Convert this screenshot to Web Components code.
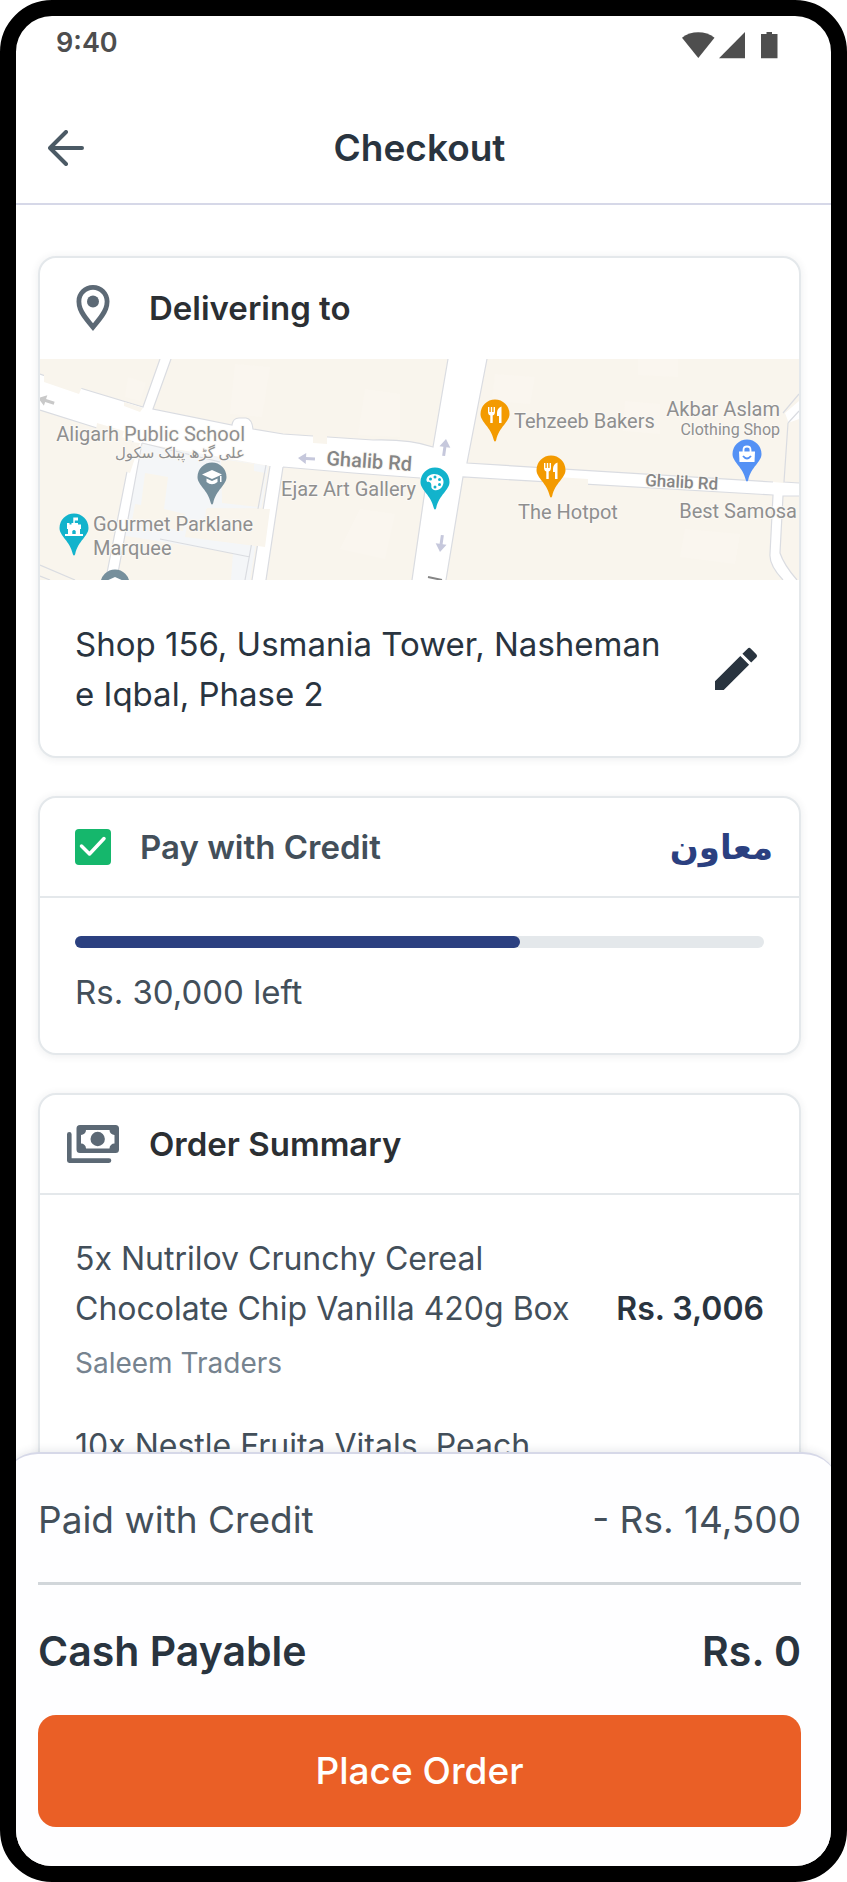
<!DOCTYPE html>
<html lang="en">
<head>
<meta charset="utf-8">
<meta name="viewport" content="width=device-width, initial-scale=1">
<title>Checkout</title>
<style>
  body { margin: 0; background: #fff; font-family: Inter, "Open Sans", sans-serif; color: #29343f; }
</style>
</head>
<body>
<phone-frame>
  <status-bar slot="top">9:40</status-bar>
  <app-header slot="top">Checkout</app-header>

  <info-card plain>
    <svg slot="icon" width="34" height="46" viewBox="0 0 33 46" aria-hidden="true">
      <path fill="#5c6975" fill-rule="evenodd" d="M16.500 0C7.400 0 0 7.300 0 16.400 0 28 9 36.500 16.500 46 24 36.500 33 28 33 16.400 33 7.300 25.600 0 16.500 0ZM16.500 4.800C23 4.800 28.200 10 28.200 16.400 28.200 25 21 32 16.500 38.300 12 32 4.800 25 4.800 16.400 4.800 10 10 4.800 16.500 4.800Z"/>
      <circle cx="16.500" cy="16.500" r="6" fill="#5c6975"/>
    </svg>
    <span slot="title">Delivering to</span>
    <street-map></street-map>
    <delivery-address>Shop 156, Usmania Tower, Nasheman e Iqbal, Phase 2</delivery-address>
  </info-card>

  <credit-card brand="معاون" value="445" max="689">Rs. 30,000 left</credit-card>

  <info-card>
    <svg slot="icon" width="52" height="38" viewBox="0 0 52 38" aria-hidden="true">
      <path fill="#5c6975" fill-rule="evenodd" d="M13 0H48.500A3.500 3.500 0 0 1 52 3.500V24.500A3.500 3.500 0 0 1 48.500 28H13A3.500 3.500 0 0 1 9.500 24.500V3.500A3.500 3.500 0 0 1 13 0ZM19 5A5 5 0 0 1 14 10V18.500A5 5 0 0 1 19 23.500H42.500A5 5 0 0 1 47.500 18.500V10A5 5 0 0 1 42.500 5Z"/>
      <circle cx="30.700" cy="14" r="7.200" fill="#5c6975"/>
      <path d="M2.300 9.300V35.600H42" fill="none" stroke="#5c6975" stroke-width="4.600" stroke-linecap="round" stroke-linejoin="round"/>
    </svg>
    <span slot="title">Order Summary</span>
    <order-list>
      <order-item price="Rs. 3,006" seller="Saleem Traders">5x Nutrilov Crunchy Cereal Chocolate Chip Vanilla 420g Box</order-item>
      <order-item>10x Nestle Fruita Vitals, Peach</order-item>
    </order-list>
  </info-card>

  <checkout-sheet slot="bottom">
    <summary-row slot="paid" amount="- Rs. 14,500">Paid with Credit</summary-row>
    <summary-row slot="total" strong amount="Rs. 0">Cash Payable</summary-row>
    Place Order
  </checkout-sheet>
</phone-frame>

<script>
const define = (name, html, setup) => {
  const tpl = document.createElement('template');
  tpl.innerHTML = html;
  customElements.define(name, class extends HTMLElement {
    constructor() {
      super();
      this.attachShadow({ mode: 'open' }).append(tpl.content.cloneNode(true));
    }
    connectedCallback() {
      if (setup) setup(this, s => this.shadowRoot.querySelector(s));
    }
  });
};

define('phone-frame', `
  <style>
    :host { display: flex; flex-direction: column; box-sizing: border-box; height: 100vh; min-height: 700px;
      border: 16px solid #000; border-radius: 52px; background: #fff; overflow: hidden; }
    main { flex: 1; min-height: 0; overflow-y: auto; scrollbar-width: none; display: flex; flex-direction: column;
      gap: 38px; padding: 51px 30px 38px 22px; }
    ::slotted(*) { flex-shrink: 0; }
  </style>
  <slot name="top"></slot>
  <main><slot></slot></main>
  <slot name="bottom"></slot>`);

define('status-bar', `
  <style>
    :host { display: flex; justify-content: space-between; align-items: flex-start; box-sizing: border-box;
      height: 76px; padding: 11px 53px 0 40px; font: 600 27px/32px Inter, sans-serif; color: #4e4e4e; }
    svg { margin-top: 5px; }
  </style>
  <time><slot></slot></time>
  <svg width="96" height="27" viewBox="0 0 96 27" fill="#4e4e4e" aria-hidden="true">
    <path d="M0 5.700C9 -1.600 23.500 -1.600 32.500 5.700L16.300 26Z"/>
    <path d="M37 26.300L63 0V26.300Z"/>
    <path d="M79 2H84.500V0H90V2H95.500V26.300H79Z"/>
  </svg>`);

define('app-header', `
  <style>
    :host { display: grid; grid-template-columns: 1fr auto 1fr; align-items: center; height: 111px;
      padding: 0 30px 0 22px; border-bottom: 2px solid #d6d8e8; }
    button { width: 56px; height: 56px; padding: 0; border: 0; background: none; display: grid; place-items: center; }
    h1 { margin: 0; font-size: 37px; line-height: 56px; font-weight: 600; }
  </style>
  <button aria-label="Back"><svg width="36" height="36" viewBox="0 0 36 36" fill="none" stroke="#4b5a65" stroke-width="4" stroke-linecap="round" stroke-linejoin="round"><path d="M18 2L2 18L18 34M3 18H34"/></svg></button>
  <h1><slot></slot></h1>`);

define('info-card', `
  <style>
    :host { display: block; border: 2px solid #e4e8eb; border-radius: 18px; background: #fff;
      box-shadow: 0 1px 8px rgba(40,50,70,.09); }
    header { display: flex; align-items: center; gap: 29px; height: 98px; padding: 0 26px; border-bottom: 2px solid #e4e8eb; }
    :host([plain]) header { height: 99px; border-color: transparent; }
    .icon { width: 54px; display: grid; place-items: center; }
    h2 { margin: 0; flex: 1; font-size: 33px; line-height: 50px; font-weight: 600; color: #2b2f33; }
  </style>
  <header><slot name="header"><span class="icon"><slot name="icon"></slot></span><h2><slot name="title"></slot></h2></slot></header>
  <slot></slot>`);

define('delivery-address', `
  <style>
    :host { display: flex; align-items: center; justify-content: space-between; gap: 28px; padding: 39px 35px 37px; }
    address { font: 400 33px/50px Inter, sans-serif; max-width: 592px; }
    button { flex: none; width: 56px; height: 56px; padding: 0; border: 0; background: none; }
  </style>
  <address><slot></slot></address>
  <button aria-label="Edit address"><svg width="56" height="56" viewBox="0 0 24 24" fill="#29343f"><path d="M3 17.250V21h3.750L17.600 10.150l-3.750-3.750L3 17.250zM20.710 7.040a1 1 0 0 0 0-1.410l-2.340-2.340a1 1 0 0 0-1.410 0l-2.200 2.200 3.750 3.750 2.200-2.200z"/></svg></button>`);

define('credit-card', `
  <style>
    :host { display: block; }
    .head { display: flex; flex: 1; align-items: center; gap: 29px; padding-left: 9px; }
    .box { display: grid; }
    .box > * { grid-area: 1 / 1; }
    input { appearance: none; margin: 0; width: 36px; height: 36px; border-radius: 4px; background: #e4e8eb; }
    input:checked { background: #15b76c; }
    input:not(:checked) + svg { visibility: hidden; }
    svg { pointer-events: none; }
    label { flex: 1; font-size: 33px; line-height: 50px; font-weight: 600; color: #434f5a; }
    b { font: 700 34px/50px "DejaVu Sans", sans-serif; color: #2b4080; }
    .body { padding: 38px 35px 36px; }
    progress { display: block; appearance: none; width: 100%; height: 12px; border: 0; }
    progress::-webkit-progress-bar { background: #e4e8eb; border-radius: 6px; }
    progress::-webkit-progress-value { background: #2b4080; border-radius: 6px; }
    p { margin: 19px 0 0; font-size: 33px; line-height: 50px; color: #434f5a; }
  </style>
  <info-card>
    <div class="head" slot="header">
      <span class="box"><input type="checkbox" id="credit" checked>
        <svg width="36" height="36" viewBox="0 0 36 36" fill="none" stroke="#fff" stroke-width="3.500" stroke-linecap="round" stroke-linejoin="round"><path d="M6.500 17L14.500 25L29 9.500"/></svg></span>
      <label for="credit">Pay with Credit</label>
      <b lang="ur" dir="rtl"></b>
    </div>
    <div class="body"><progress aria-label="Credit left"></progress><p><slot></slot></p></div>
  </info-card>`, (el, $) => {
  $('b').textContent = el.getAttribute('brand');
  $('progress').max = Number(el.getAttribute('max'));
  $('progress').value = Number(el.getAttribute('value'));
});

define('order-list', `
  <style>:host { display: flex; flex-direction: column; gap: 37px; padding: 39px 35px 37px; }</style>
  <slot></slot>`);

define('order-item', `
  <style>
    :host { display: flex; align-items: center; justify-content: space-between; gap: 28px; }
    p { margin: 0; font-size: 32px; line-height: 50px; color: #434f5a; }
    small { display: block; margin-top: 8px; font-size: 28px; line-height: 42px; color: #76838f; }
    small:empty { display: none; }
    strong { flex: none; font-size: 32px; line-height: 50px; font-weight: 600; }
  </style>
  <div><p><slot></slot></p><small></small></div><strong></strong>`, (el, $) => {
  $('small').textContent = el.getAttribute('seller') || '';
  $('strong').textContent = el.getAttribute('price') || '';
});

define('checkout-sheet', `
  <style>
    :host { display: block; margin: 0 -8px 0 -14px; padding: 38px 38px 39px 36px; border-top: 2px solid #d6d8e8;
      border-radius: 36px 36px 0 0; background: #fefeff; box-shadow: 0 -1px 10px rgba(40,50,70,.12); position: relative; }
    hr { margin: 34px 0 38px; border: 0; height: 3px; background: #d1d6da; }
    button { display: block; width: 100%; height: 112px; margin-top: 36px; padding: 0; border: 0; border-radius: 18px;
      background: #ea5f26; color: #fff; font: 500 37px/56px Inter, sans-serif; }
  </style>
  <slot name="paid"></slot><hr><slot name="total"></slot>
  <button><slot></slot></button>`);

define('summary-row', `
  <style>
    :host { display: flex; justify-content: space-between; font-size: 37px; line-height: 56px; color: #434f5a; }
    :host([strong]) { font-size: 41px; font-weight: 600; color: #29343f; }
  </style>
  <span><slot></slot></span><span id="amount"></span>`, (el, $) => {
  $('#amount').textContent = el.getAttribute('amount');
});

define('street-map', `
  <style>
    :host { display: block; }
    svg { display: block; width: 100%; height: 221px; background: #f9f5ed; }
    text { font-family: Roboto, "DejaVu Sans", sans-serif; font-size: 20px; fill: #8f8f8f; paint-order: stroke;
      stroke: #fbf9f5; stroke-width: 2px; stroke-linejoin: round; }
    .small { font-size: 16px; }
    .urdu { font-size: 15px; }
    .road { font-weight: 500; fill: #858585; }
    .side { font-size: 17px; }
    .edge { fill: none; stroke: #dadce1; stroke-width: 1.200; }
  </style>
  <svg viewBox="0 0 759 221" preserveAspectRatio="xMidYMid slice" role="img" aria-label="Map of the delivery location">
    <defs>
      <path id="pin" d="M0 -14.500A14.500 14.500 0 0 0 -14.500 0C-14.500 8 -4 13 -1.200 26Q0 29 1.200 26C4 13 14.500 8 14.500 0A14.500 14.500 0 0 0 0 -14.500Z"/>
      <path id="fork" d="M-7 -7V-2.500Q-7 1 -4.700 1.500V9H-2.300V1.500Q0 1 0 -2.500V-7H-1.400V-2H-2.800V-7H-4.200V-2H-5.600V-7ZM6.500 -7.500Q2 -6 2 -1V2H4V9H6.500Z"/>
      <path id="arrow" d="M0 0L8 -5.500V-1.500H17V1.500H8V5.500Z"/>
      <path id="cap" d="M0 -7L10 -2.500L0 2L-10 -2.500ZM-5.500 1.500V5Q0 9.500 5.500 5V1.500L0 4ZM8 -1H9.500V5H8Z"/>
    </defs>
    <g fill="#faf6ef">
      <path d="M195 5L230 8L222 58L190 55ZM325 30L360 35V78L318 76ZM88 18L106 24L100 42L85 38ZM320 150L355 155L345 200L300 190ZM455 15L495 18L490 45L452 42ZM598 0H638V18L598 16ZM585 42L620 45V75L583 72ZM645 170L700 175L695 205L640 198Z"/>
    </g>
    <path fill="#f4f6f8" d="M103 85L228 107L210 221H191L193 194L80 176Z"/>
    <path fill="#f9f5ec" d="M105 114L128 118L124 150L145 155L143 172L92 162L95 145L101 146ZM181 100L214 105V112L226 114L219 148L182 144ZM166 150L229 149L225 188L145 178L148 160L165 163Z"/>
    <path fill="#fff" d="M0 15L40 29L103 48L120 0H131L113 50L192 66Q193 59 199 59H206Q212 60 213 70L243 75L333 81Q370 80 393 88L408 0H447L427 104L733 123L744 124L748 62L745 54L759 42V60L748 64L744 123L759 124V137L743 137L740 194Q744 206 757 221H743Q729 206 730 195L733 136L423 118L406 221H372L385 134L383 119L313 114L243 108L226 221H212L230 107L102 84L78 214L77 221H66L67 214L93 82L57 69L0 51Z"/>
    <g class="edge">
      <path d="M0 15L40 29L103 48L120 0M131 0L113 50L192 66Q193 59 199 59H206Q212 60 213 70L243 75L333 81Q370 80 393 88L408 0M447 0L427 104L733 123M748 64L744 123L759 124M748 64L759 52M743 54L759 35M759 137L743 137L740 194Q744 206 757 221M743 221Q729 206 730 195L733 136L423 118L406 221M372 221L386 124M0 51L57 69M93 82L67 214V221M102 84L78 214M102 84L180 103M230 107L212 221M243 108L226 221M226 106L205 221M243 108L313 114L380 119M0 206L35 221M0 217L10 221M120 180L210 198"/>
    </g>
    <path fill="#f9f5ed" d="M4 15L42 28L39 35L4 23ZM84 43L103 49L100 53L84 47ZM57 64L84 72L82 79L56 71ZM273 75L287 77V85L273 84ZM502 117L548 120V127L502 125ZM92 83L100 84L90 114L84 112ZM167 149L230 150L225 188L166 180Z"/>
    <g fill="#c6c8dc">
      <use href="#arrow" transform="translate(258 99) rotate(3)"/>
      <use href="#arrow" transform="translate(406 80) rotate(98)"/>
      <use href="#arrow" transform="translate(400 193) rotate(-82)"/>
      <use href="#arrow" transform="translate(-2 39) rotate(18)" fill="#c9c9c9"/>
    </g>
    <path d="M388 218L402 221" stroke="#858585" stroke-width="2"/>

    <text x="205" y="82" text-anchor="end">Aligarh Public School</text>
    <text x="205" y="99" direction="rtl" class="urdu" lang="ur">علی گڑھ پبلک سکول</text>
    <text x="53" y="172">Gourmet Parklane</text>
    <text x="53" y="196">Marquee</text>
    <text class="road" x="286" y="106" transform="rotate(4 286 106)">Ghalib Rd</text>
    <text x="376" y="137" text-anchor="end">Ejaz Art Gallery</text>
    <text x="474" y="69">Tehzeeb Bakers</text>
    <text x="478" y="160">The Hotpot</text>
    <text x="740" y="57" text-anchor="end">Akbar Aslam</text>
    <text x="740" y="76" text-anchor="end" class="small">Clothing Shop</text>
    <text class="road side" x="605" y="127" transform="rotate(3 605 127)">Ghalib Rd</text>
    <text x="757" y="159" text-anchor="end">Best Samosa</text>

    <g transform="translate(455 55)" fill="#f39a00"><use href="#pin"/><use href="#fork" fill="#fff"/></g>
    <g transform="translate(511 111)" fill="#f39a00"><use href="#pin"/><use href="#fork" fill="#fff"/></g>
    <g transform="translate(395 123)" fill="#12b3cc"><use href="#pin"/>
      <path fill="#fff" d="M-1 -8C-6 -8 -9 -4 -8.500 -1.500 -8 1 -5 -1 -4 1.500 -3 4 -5 6 -1 8 4 9.500 8.500 5 8.500 0 8.500 -5 4 -8 -1 -8Z"/>
      <g fill="#12b3cc"><circle cx="-4.500" cy="-3" r="1.500"/><circle cx="0" cy="-5" r="1.500"/><circle cx="4.500" cy="-2.500" r="1.500"/><circle cx="4.500" cy="2.500" r="1.500"/><circle cx="0" cy="5" r="1.500"/></g></g>
    <g transform="translate(707 95)" fill="#5491f5"><use href="#pin"/>
      <path fill="#fff" d="M-8 -2.500H8L7.500 8H-7.500Z"/><path d="M-3.500 -2V-4Q-3.500 -7.500 0 -7.500T3.500 -4V-2" fill="none" stroke="#fff" stroke-width="1.800"/><path d="M-4 2Q0 7 4 2" fill="none" stroke="#5491f5" stroke-width="1.800"/></g>
    <g transform="translate(172 118)" fill="#768f9c"><use href="#pin"/><use href="#cap" fill="#fff"/></g>
    <g transform="translate(75 225)" fill="#768f9c"><use href="#pin"/><use href="#cap" fill="#fff"/></g>
    <g transform="translate(34 169)" fill="#12b3cc"><use href="#pin"/>
      <path fill="#fff" d="M-0.700 -10.500H4V-7.500H0.800V-5H4V-3.500H7V1H6V6H9V8H-9V6H-6V1H-7V-5H-4.500V-3.500H-2.500V-5H-0.700Z"/><path d="M-1.700 6V3Q0 1 1.700 3V6Z"/></g>
  </svg>`);
</script>
</body>
</html>
